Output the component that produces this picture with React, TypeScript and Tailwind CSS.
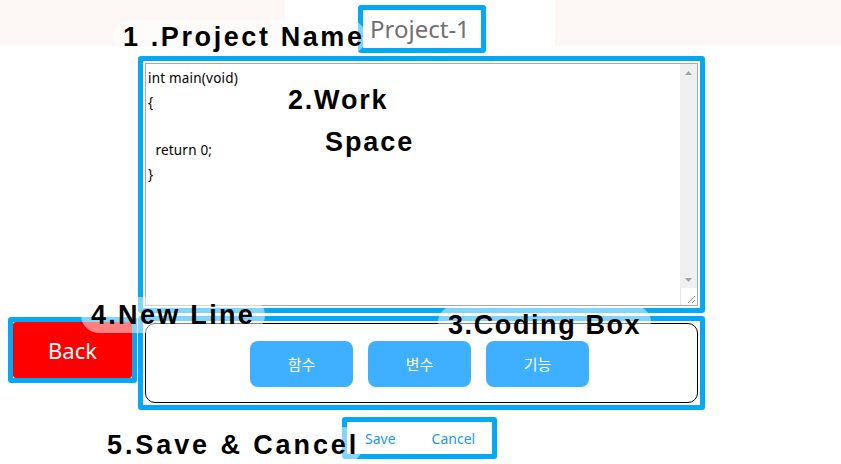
import React from "react";

const codeLines = ["int main(void)", "{", "", "  return 0;", "}"];
const tools = ["함수", "변수", "기능"];

function Label({ text, className }: { text: string; className: string }) {
  return (
    <div
      className={`absolute whitespace-pre rounded-full bg-white/50 pl-[10px] font-bold leading-[26px] text-black ${className}`}
    >
      {text}
    </div>
  );
}

function ScrollColumn() {
  return (
    <div className="flex w-[17px] flex-col">
      <div className="flex flex-1 flex-col bg-[#f0f0f0]">
        <div className="flex h-[17px] items-center justify-center">
          <svg width="7" height="4" viewBox="0 0 7 4">
            <path d="M3.5 0 L7 4 L0 4 Z" fill="#a3a3a3" />
          </svg>
        </div>
        <div className="flex-1" />
        <div className="flex h-[17px] items-center justify-center">
          <svg width="7" height="4" viewBox="0 0 7 4">
            <path d="M0 0 L7 0 L3.5 4 Z" fill="#a3a3a3" />
          </svg>
        </div>
      </div>
      <div className="h-[17px] border-l border-[#e6e6e6] bg-white">
        <svg width="16" height="17" viewBox="0 0 16 17">
          <path d="M14 8 L7 15 M14 12 L11 15" stroke="#888" strokeWidth="1" />
        </svg>
      </div>
    </div>
  );
}

export default function App() {
  return (
    <div className="relative h-[464px] w-[841px] overflow-hidden bg-white font-['Liberation_Sans',Arial,sans-serif]">
      {/* header with project name */}
      <div className="flex h-[46px]">
        <div className="w-[285px] bg-[#fdf7f6]" />
        <div className="w-[270px]">
          <div className="ml-[73px] mt-[5px] h-[48px] w-[128px] rounded-[3px] border-[5px] border-[#03a9f4] bg-white pl-[7px] pt-[6px] font-['Noto_Sans',sans-serif] text-[24px] leading-[26px] text-[#707070]">
            Project-1
          </div>
        </div>
        <div className="flex-1 bg-[#fdf7f6]" />
      </div>

      {/* work space */}
      <div className="ml-[138px] mt-[10px] h-[257px] w-[567px] rounded-[3px] border-[5px] border-[#03a9f4] p-[2px]">
        <div className="flex h-full border border-[#a9a9a9] bg-white">
          <div className="flex-1 pl-[2px] pt-[2px] font-['Noto_Sans',sans-serif] text-[13.5px] leading-[24px] tracking-[0.2px] text-black">
            {codeLines.map((line, i) => (
              <div key={i} className="h-[24px] whitespace-pre">
                {line}
              </div>
            ))}
          </div>
          <ScrollColumn />
        </div>
      </div>

      {/* back + coding box */}
      <div className="mt-[3px] flex items-start gap-[1px] pl-[8px]">
        <div className="mt-[1px] h-[66px] w-[129px] rounded-[3px] border-[5px] border-[#03a9f4]">
          <button className="flex h-full w-full items-center justify-center rounded-[3px] bg-[#ff0000] font-['Noto_Sans',sans-serif] text-[22px] text-white">
            Back
          </button>
        </div>
        <div className="h-[94px] w-[567px] rounded-[3px] border-[5px] border-[#03a9f4] p-[2px]">
          <div className="flex h-full gap-[15px] rounded-[10px] border border-black bg-white pl-[104px] pt-[17px]">
            {tools.map((t) => (
              <button
                key={t}
                className="h-[46px] w-[103px] rounded-[8px] bg-[#3fb0ff] font-['Noto_Sans_CJK_KR',sans-serif] text-[15px] text-white"
              >
                {t}
              </button>
            ))}
          </div>
        </div>
      </div>

      {/* save / cancel */}
      <div className="ml-[342px] mt-[7px] flex h-[42px] w-[155px] items-center gap-[36px] rounded-[3px] border-[5px] border-[#03a9f4] pl-[18px] font-['Noto_Sans',sans-serif] text-[14px] text-[#2196f3]">
        <span>Save</span>
        <span>Cancel</span>
      </div>

      {/* annotation labels */}
      <Label text="1 .Project Name" className="left-[113px] top-[20px] py-[4px] pr-[1px] text-[27px] tracking-[2.6px]" />
      <Label text="2.Work" className="left-[278px] top-[82px] py-[5px] pr-[10px] text-[27px] tracking-[1.8px]" />
      <Label text="Space" className="left-[315px] top-[124px] py-[5px] pr-[10px] text-[27px] tracking-[1.9px]" />
      <Label text="4.New Line" className="left-[81px] top-[297px] py-[5px] pr-[10px] text-[27px] tracking-[2.3px]" />
      <Label text="3.Coding Box" className="left-[438px] top-[306px] pb-[0px] pr-[10px] pt-[6px] text-[27px] tracking-[1.6px]" />
      <Label text="5.Save & Cancel" className="left-[97px] top-[427px] py-[5px] pr-[4px] text-[27px] tracking-[2.9px]" />
    </div>
  );
}
